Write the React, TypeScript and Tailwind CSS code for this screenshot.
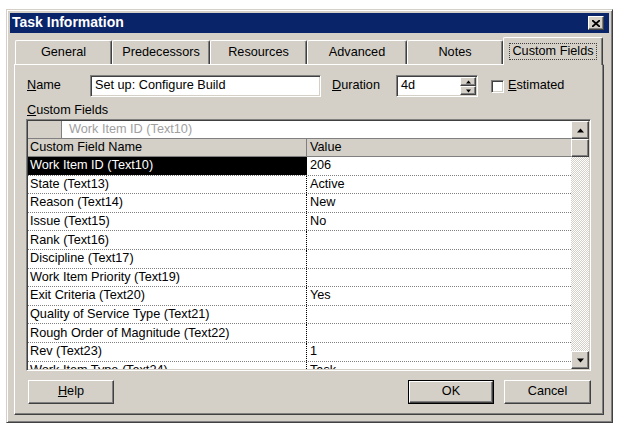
import React from "react";

const rows: [string, string][] = [
    ["Work Item ID (Text10)", "206"],
    ["State (Text13)", "Active"],
    ["Reason (Text14)", "New"],
    ["Issue (Text15)", "No"],
    ["Rank (Text16)", ""],
    ["Discipline (Text17)", ""],
    ["Work Item Priority (Text19)", ""],
    ["Exit Criteria (Text20)", "Yes"],
    ["Quality of Service Type (Text21)", ""],
    ["Rough Order of Magnitude (Text22)", ""],
    ["Rev (Text23)", "1"],
    ["Work Item Type (Text24)", "Task"],
];

const tabs = [
    { label: "General", w: "w-[97px]" },
    { label: "Predecessors", w: "w-[98px]" },
    { label: "Resources", w: "w-[97px]" },
    { label: "Advanced", w: "w-[100px]" },
    { label: "Notes", w: "w-[96px]" },
];

const raised =
    "border border-t-white border-l-white border-r-[#404040] border-b-[#404040] shadow-[inset_-1px_-1px_0_#808080]";
const sunken =
    "border border-t-[#808080] border-l-[#808080] border-r-white border-b-white shadow-[inset_1px_1px_0_#404040,inset_-1px_-1px_0_#d4d0c8]";

const Arrow: React.FC<{ up?: boolean; size?: number }> = ({ up, size = 7 }) => (
    <svg width={size} height={Math.ceil(size / 2) + 1} viewBox="0 0 7 4">
        {up ? <path d="M3.5 0 L7 4 L0 4 Z" fill="#000" /> : <path d="M0 0 L7 0 L3.5 4 Z" fill="#000" />}
    </svg>
);

const App: React.FC = () => {
    return (
        <div className="w-[620px] h-[430px] bg-white pt-[9px] pl-[6px] font-['Liberation_Sans',Arial,sans-serif] text-[12.7px] text-black">
            <div className="w-[607px] h-[414px] bg-[#d4d0c8] border border-t-[#d4d0c8] border-l-[#d4d0c8] border-r-[#404040] border-b-[#404040] shadow-[inset_1px_1px_0_#fff,inset_-1px_-1px_0_#808080] p-[3px] flex flex-col">
                {/* title bar */}
                <div className="h-[20px] bg-[#0a246a] flex items-center justify-between pl-[2px] pr-[5px]">
                    <span className="text-white font-bold text-[14px] leading-none -mt-[2px]">Task Information</span>
                    <div className={`w-[16px] h-[14px] bg-[#d4d0c8] ${raised} flex items-center justify-center`}>
                        <svg width="8" height="7" viewBox="0 0 8 7">
                            <path d="M0 0 L8 7 M8 0 L0 7" stroke="#000" strokeWidth="1.8" />
                        </svg>
                    </div>
                </div>

                {/* tabs */}
                <div className="mt-[4px] ml-[4px] w-[590px] flex flex-col">
                    <div className="h-[27px] flex items-end pl-[1px] relative z-10">
                        {tabs.map((t) => (
                            <div
                                key={t.label}
                                className={`${t.w} h-[24px] flex items-center justify-center rounded-t-[2px] border-t border-l border-r border-t-white border-l-white border-r-[#404040] shadow-[inset_-1px_0_0_#808080]`}
                            >
                                {t.label}
                            </div>
                        ))}
                        <div className="w-[100px] h-[28px] -mb-[1px] bg-[#d4d0c8] flex items-center justify-center rounded-t-[2px] border-t border-l border-r border-t-white border-l-white border-r-[#404040] shadow-[inset_-1px_0_0_#808080]">
                            <span className="px-[2px] leading-[15px] border border-dotted border-[#404040]">Custom Fields</span>
                        </div>
                    </div>

                    {/* panel */}
                    <div className="h-[351px] border border-t-white border-l-white border-r-[#404040] border-b-[#404040] shadow-[inset_-1px_-1px_0_#808080] pt-[10px] pl-[11px] pr-[12px] flex flex-col">
                        {/* name row */}
                        <div className="h-[22px] flex items-center">
                            <span className="w-[64px] pl-[1px]">
                                <span className="underline">N</span>ame
                            </span>
                            <div className={`w-[231px] h-[22px] bg-white ${sunken} flex items-center pl-[4px]`}>
                                Set up: Configure Build
                            </div>
                            <span className="ml-[11px] w-[64px]">
                                <span className="underline">D</span>uration
                            </span>
                            <div className={`w-[82px] h-[22px] bg-white ${sunken} flex items-center pl-[4px] justify-between`}>
                                <span>4d</span>
                                <div className="flex flex-col mr-[1px]">
                                    <div className={`w-[16px] h-[9px] bg-[#d4d0c8] ${raised} flex items-center justify-center`}>
                                        <Arrow up size={5} />
                                    </div>
                                    <div className={`w-[16px] h-[9px] bg-[#d4d0c8] ${raised} flex items-center justify-center`}>
                                        <Arrow size={5} />
                                    </div>
                                </div>
                            </div>
                            <div className={`ml-[13px] w-[13px] h-[13px] bg-white ${sunken}`} />
                            <span className="ml-[4px]">
                                <span className="underline">E</span>stimated
                            </span>
                        </div>

                        {/* custom fields label */}
                        <div className="mt-[5px] h-[16px] leading-[16px] pl-[1px]">
                            <span className="underline">C</span>ustom Fields
                        </div>

                        {/* grid */}
                        <div className={`mt-[1px] w-[565px] h-[252px] bg-white ${sunken} p-[1px] flex`}>
                            <div className="flex-1 flex flex-col overflow-hidden">
                                <div className="h-[18px] shrink-0 flex border-b border-[#808080]">
                                    <div className="w-[34px] bg-[#d4d0c8] border-r border-[#808080]" />
                                    <div className="flex-1 flex items-center pl-[7px] text-[#a0a0a0]">Work Item ID (Text10)</div>
                                </div>
                                <div className="h-[18px] shrink-0 flex bg-[#d4d0c8] border-b border-[#808080]">
                                    <div className="w-[279px] flex items-center pl-[2px] border-r border-[#808080]">Custom Field Name</div>
                                    <div className="flex-1 flex items-center pl-[3px]">Value</div>
                                </div>
                                {rows.map(([name, value], i) => (
                                    <div key={name} className="h-[18.6px] shrink-0 flex border-b border-dotted border-[#808080]">
                                        <div
                                            className={`w-[279px] flex items-center pl-[2px] border-r border-dotted border-black ${
                                                i === 0 ? "bg-black text-white" : ""
                                            }`}
                                        >
                                            {name}
                                        </div>
                                        <div className="flex-1 flex items-center pl-[3px]">{value}</div>
                                    </div>
                                ))}
                            </div>
                            {/* scrollbar */}
                            <div className="w-[18px] flex flex-col bg-[repeating-conic-gradient(#d4d0c8_0%_25%,#ffffff_0%_50%)] bg-[length:2px_2px]">
                                <div className={`h-[18px] bg-[#d4d0c8] ${raised} flex items-center justify-center`}>
                                    <Arrow up />
                                </div>
                                <div className={`h-[18px] bg-[#d4d0c8] ${raised}`} />
                                <div className="flex-1" />
                                <div className={`h-[18px] bg-[#d4d0c8] ${raised} flex items-center justify-center`}>
                                    <Arrow />
                                </div>
                            </div>
                        </div>

                        {/* buttons */}
                        <div className="mt-[9px] flex items-center">
                            <div className={`ml-[2px] w-[86px] h-[24px] ${raised} flex items-center justify-center`}>
                                <span>
                                    <span className="underline">H</span>elp
                                </span>
                            </div>
                            <div className="ml-auto w-[86px] h-[24px] border border-black flex">
                                <div className={`flex-1 ${raised} flex items-center justify-center`}>OK</div>
                            </div>
                            <div className={`ml-[10px] w-[87px] h-[24px] ${raised} flex items-center justify-center`}>
                                Cancel
                            </div>
                        </div>
                    </div>
                </div>
            </div>
        </div>
    );
};

export default App;
